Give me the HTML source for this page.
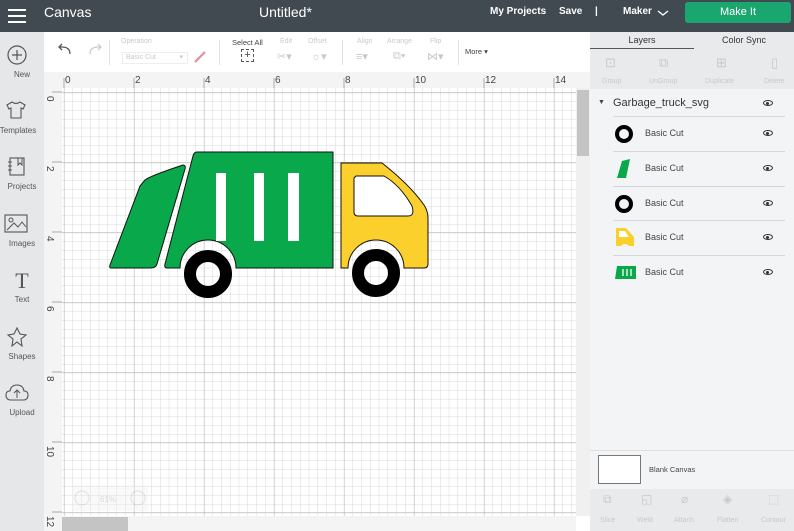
<!DOCTYPE html>
<html><head><meta charset="utf-8"><style>
*{margin:0;padding:0;box-sizing:border-box}
body{width:794px;height:531px;overflow:hidden;position:relative;font-family:"Liberation Sans",sans-serif;background:#fff}
.a{position:absolute}
.top{left:0;top:0;width:794px;height:32px;background:#414a51;color:#fff}
.side{left:0;top:32px;width:44px;height:499px;background:#e6e7e9}
.side div{position:absolute;width:44px;text-align:center;font-size:8px;color:#555}
.tb{left:44px;top:32px;width:546px;height:40px;background:#fff}
.g{color:#c6c9cc;font-size:7px}
.rp{left:590px;top:32px;width:204px;height:499px;background:#f3f4f6}
.row{position:absolute;left:23px;width:172px;height:35px;border-top:1.5px solid #d5d7da}
.row span{position:absolute;left:32px;top:11px;font-size:9px;color:#444}
.eye{position:absolute;width:10px;height:6px;border:1.5px solid #333;border-radius:50%;}
.eye:after{content:"";position:absolute;left:2px;top:0.5px;width:3px;height:3px;background:#333;border-radius:50%}
</style></head><body>
<div class="a top">
 <div class="a" style="left:8px;top:9px;width:18px;height:2px;background:#fff;box-shadow:0 6px 0 #fff,0 12px 0 #fff"></div>
 <div class="a" style="left:44px;top:4px;font-size:14px">Canvas</div>
 <div class="a" style="left:259px;top:4px;font-size:14px">Untitled*</div>
 <div class="a" style="left:490px;top:6px;font-size:10px;font-weight:bold">My Projects</div>
 <div class="a" style="left:559px;top:6px;font-size:10px;font-weight:bold">Save</div>
 <div class="a" style="left:595px;top:6px;font-size:10px;font-weight:bold">|</div>
 <div class="a" style="left:623px;top:6px;font-size:10px;font-weight:bold">Maker</div>
 <svg class="a" style="left:657px;top:9px" width="12" height="8"><path d="M1 2 L6 6 L11 2" stroke="#fff" fill="none" stroke-width="1.4"/></svg>
 <div class="a" style="left:685px;top:2px;width:106px;height:21px;background:#1aa66f;border-radius:3px;text-align:center;font-size:11px;line-height:21px">Make It</div>
</div>
<div class="a side">
 <svg class="a" style="left:6px;top:12px" width="22" height="22"><circle cx="11" cy="11" r="9" fill="none" stroke="#555" stroke-width="1.2"/><path d="M11 6v10M6 11h10" stroke="#555" stroke-width="1.2"/></svg>
 <div style="top:38px">New</div>
 <svg class="a" style="left:5px;top:68px" width="22" height="20"><path d="M7 2 L2 5 L4 9 L6 8 L6 18 L16 18 L16 8 L18 9 L20 5 L15 2 Q11 5 7 2Z" fill="none" stroke="#555" stroke-width="1.1"/></svg>
 <div style="top:94px;left:-4px">Templates</div>
 <svg class="a" style="left:7px;top:124px" width="20" height="22"><rect x="3" y="2" width="14" height="17" fill="none" stroke="#555" stroke-width="1.1"/><path d="M1 6h4M1 10h4M1 14h4M11 2v7l2-2 2 2V2" stroke="#555" fill="none"/></svg>
 <div style="top:150px">Projects</div>
 <svg class="a" style="left:4px;top:182px" width="24" height="20"><rect x="1" y="1" width="22" height="17" fill="none" stroke="#555" stroke-width="1.1"/><circle cx="7" cy="6" r="2" fill="none" stroke="#555"/><path d="M3 16 L10 9 L14 13 L18 8 L22 13" fill="none" stroke="#555"/></svg>
 <div style="top:207px">Images</div>
 <div style="top:236px;font-size:22px;font-family:'Liberation Serif',serif;color:#555">T</div>
 <div style="top:263px">Text</div>
 <svg class="a" style="left:6px;top:294px" width="22" height="22"><path d="M11 2 L14 8 L20 9 L15 13 L16 20 L11 16 L6 20 L7 13 L2 9 L8 8Z" fill="none" stroke="#555" stroke-width="1.1"/></svg>
 <div style="top:320px">Shapes</div>
 <svg class="a" style="left:5px;top:352px" width="24" height="18"><path d="M6 16 Q1 16 1 11 Q1 7 5 7 Q6 1 12 1 Q18 1 19 7 Q23 7 23 11 Q23 16 18 16Z" fill="none" stroke="#555" stroke-width="1.1"/><path d="M12 14V6M9 9l3-3 3 3" fill="none" stroke="#555"/></svg>
 <div style="top:376px">Upload</div>
</div>
<div class="a tb">
 <svg class="a" style="left:12px;top:10px" width="50" height="16"><path d="M14 12 Q14 5 6 5 L3 5 M6 2 L3 5 L6 8" fill="none" stroke="#555" stroke-width="1.3"/><path d="M34 12 Q34 5 42 5 L45 5 M42 2 L45 5 L42 8" fill="none" stroke="#ccc" stroke-width="1.3"/></svg>
 <div class="a" style="left:65px;top:8px;width:1px;height:25px;background:#e3e3e3"></div>
 <div class="a g" style="left:77px;top:6px">Operation</div>
 <div class="a g" style="left:78px;top:20px;width:66px;height:12px;border:1px solid #eee;padding-left:3px;line-height:10px">Basic Cut <span style="float:right;margin-right:4px">▾</span></div>
 <svg class="a" style="left:149px;top:18px" width="14" height="14"><path d="M2 12 L12 2" stroke="#e58a97" stroke-width="2"/></svg>
 <div class="a" style="left:175px;top:8px;width:1px;height:25px;background:#e3e3e3"></div>
 <div class="a" style="left:188px;top:6px;font-size:7.5px;color:#444">Select All</div>
 <div class="a" style="left:197px;top:17px;width:13px;height:13px;border:1px dashed #555;font-size:11px;line-height:11px;text-align:center;color:#444">+</div>
 <div class="a g" style="left:236px;top:6px">Edit</div><div class="a g" style="left:233px;top:18px;font-size:11px">✂▾</div>
 <div class="a g" style="left:264px;top:6px">Offset</div><div class="a g" style="left:267px;top:18px;font-size:11px">☼▾</div>
 <div class="a" style="left:298px;top:8px;width:1px;height:25px;background:#e3e3e3"></div>
 <div class="a g" style="left:313px;top:6px">Align</div><div class="a g" style="left:312px;top:18px;font-size:11px">≡▾</div>
 <div class="a g" style="left:343px;top:6px">Arrange</div><div class="a g" style="left:349px;top:18px;font-size:11px">⧉▾</div>
 <div class="a g" style="left:386px;top:6px">Flip</div><div class="a g" style="left:383px;top:18px;font-size:11px">⋈▾</div>
 <div class="a" style="left:414px;top:8px;width:1px;height:25px;background:#e3e3e3"></div>
 <div class="a" style="left:421px;top:15px;font-size:7.5px;color:#444">More ▾</div>
</div>
<svg class="a" style="left:44px;top:72px" width="546" height="459">
 <defs>
  <pattern id="mi" x="2.25" y="3.25" width="8.75" height="8.75" patternUnits="userSpaceOnUse"><path d="M0 0H8.75M0 0V8.75" stroke="#d9d9d9" stroke-width="1" fill="none"/></pattern>
  <pattern id="ma" x="20" y="20" width="70" height="70" patternUnits="userSpaceOnUse"><path d="M0 0H70M0 0V70" stroke="#b8b8b8" stroke-width="1" fill="none"/></pattern>
 </defs>
 <rect x="0" y="0" width="546" height="459" fill="#fff"/>
 <rect x="18" y="16" width="514" height="428" fill="url(#mi)"/>
 <rect x="18" y="16" width="514" height="428" fill="url(#ma)"/>
 <rect x="0" y="0" width="546" height="16" fill="#f4f4f4"/>
 <rect x="0" y="0" width="18" height="459" fill="#f4f4f4"/>
 <g stroke="#aaa" stroke-width="1">
  <path d="M20 6V16M90 6V16M160 6V16M230 6V16M300 6V16M370 6V16M440 6V16M510 6V16"/>
  <path d="M8 20H18M8 90H18M8 160H18M8 230H18M8 300H18M8 370H18M8 440H18"/>
 </g>
 <g font-size="10" fill="#444" font-family="Liberation Sans">
  <text x="21" y="11">0</text><text x="91" y="11">2</text><text x="161" y="11">4</text><text x="231" y="11">6</text><text x="301" y="11">8</text><text x="371" y="11">10</text><text x="441" y="11">12</text><text x="511" y="11">14</text>
  <text transform="translate(3,24) rotate(90)">0</text><text transform="translate(3,94) rotate(90)">2</text><text transform="translate(3,164) rotate(90)">4</text><text transform="translate(3,234) rotate(90)">6</text><text transform="translate(3,304) rotate(90)">8</text><text transform="translate(3,374) rotate(90)">10</text><text transform="translate(3,444) rotate(90)">12</text>
 </g>
 <rect x="532" y="16" width="14" height="428" fill="#f0f0f0"/>
 <rect x="533" y="18" width="12" height="66" fill="#c4c4c4"/>
 <rect x="18" y="444" width="514" height="15" fill="#f4f4f4"/>
 <rect x="18" y="445" width="66" height="14" fill="#c4c4c4"/>
 <g opacity="0.35"><rect x="28" y="413" width="76" height="26" fill="#eee"/><circle cx="38" cy="426" r="7" fill="none" stroke="#aaa"/><circle cx="94" cy="426" r="7" fill="none" stroke="#aaa"/><text x="56" y="430" font-size="8" fill="#999">61%</text></g>
 <g transform="translate(-44,-72)" stroke="#111" stroke-width="1">
  <path d="M145 180 Q150 176 183 165 Q186 165 185 169 L157 264 Q156 268 150 268 L111 268 Q109 268 110 265 L140 186Z" fill="#09a84a"/>
  <path d="M197 152 L333 152 L333 268 L236 268 A28 28 0 0 0 180 268 L167 268 Q164 268 165 264 L193 156 Q194 152 197 152Z" fill="#09a84a"/>
  <rect x="216" y="173" width="10" height="68" fill="#fff" stroke="none"/>
  <rect x="254" y="173" width="10" height="68" fill="#fff" stroke="none"/>
  <rect x="288" y="173" width="11" height="68" fill="#fff" stroke="none"/>
  <path d="M341 163 L382 163 Q410 185 424 205 Q428 211 428 218 L428 264 Q428 268 424 268 L404 268 A28 28 0 0 0 348 268 L341 268Z" fill="#fcd02c"/>
  <path d="M356 176 L384 176 Q400 185 412 206 Q415 216 408 216 L358 216 Q354 216 354 212 L354 178Z" fill="#fff"/>
 </g>
 <g transform="translate(-44,-72)">
  <circle cx="208" cy="274" r="18" fill="none" stroke="#000" stroke-width="12"/>
  <circle cx="376" cy="273" r="18" fill="none" stroke="#000" stroke-width="12"/>
 </g>
</svg>
<div class="a rp">
 <div class="a" style="left:0;top:0;width:204px;height:17px;background:#e9eaec"></div>
 <div class="a" style="left:0;top:0;width:104px;height:17px;border-bottom:1.5px solid #555;text-align:center;font-size:9px;line-height:16px;color:#333">Layers</div>
 <div class="a" style="left:104px;top:0;width:100px;text-align:center;font-size:9px;line-height:16px;color:#333">Color Sync</div>
 <div class="a" style="left:0;top:17px;width:204px;height:40px;background:#e9eaec"></div>
 <div class="a g" style="left:15px;top:23px;font-size:13px">⊡</div><div class="a g" style="left:12px;top:46px">Group</div>
 <div class="a g" style="left:69px;top:23px;font-size:13px">⧉</div><div class="a g" style="left:59px;top:46px">UnGroup</div>
 <div class="a g" style="left:126px;top:23px;font-size:13px">⊞</div><div class="a g" style="left:115px;top:46px">Duplicate</div>
 <div class="a g" style="left:181px;top:23px;font-size:13px">▯</div><div class="a g" style="left:174px;top:46px">Delete</div>
 <div class="a" style="left:8px;top:67px;font-size:7px;color:#444">▼</div>
 <div class="a" style="left:23px;top:65px;font-size:11px;color:#333">Garbage_truck_svg</div>
 <div class="eye" style="left:173px;top:68px"></div>
 <div class="row" style="top:84px"><svg class="a" style="left:1px;top:7px" width="20" height="20"><circle cx="10" cy="10" r="7" fill="none" stroke="#000" stroke-width="4"/></svg><span>Basic Cut</span><div class="eye" style="left:150px;top:13px"></div></div>
 <div class="row" style="top:119px"><svg class="a" style="left:1px;top:6px" width="20" height="22"><path d="M8 3 L16 1 L12 20 L3 20Z" fill="#09a84a"/></svg><span>Basic Cut</span><div class="eye" style="left:150px;top:13px"></div></div>
 <div class="row" style="top:154px"><svg class="a" style="left:1px;top:7px" width="20" height="20"><circle cx="10" cy="10" r="7" fill="none" stroke="#000" stroke-width="4"/></svg><span>Basic Cut</span><div class="eye" style="left:150px;top:13px"></div></div>
 <div class="row" style="top:188px"><svg class="a" style="left:1px;top:5px" width="22" height="22"><path d="M2 2 L12 2 L20 11 L20 20 L15 20 A5 5 0 0 0 7 20 L2 20Z" fill="#fcd02c"/><path d="M5 5 L11 5 L15 11 L5 11Z" fill="#fff"/></svg><span>Basic Cut</span><div class="eye" style="left:150px;top:13px"></div></div>
 <div class="row" style="top:223px"><svg class="a" style="left:0;top:8px" width="24" height="18"><path d="M4 2 L23 2 L23 15 L2 15Z" fill="#09a84a"/><path d="M10 5v7M14 5v7M18 5v7" stroke="#fff" stroke-width="1.3"/></svg><span>Basic Cut</span><div class="eye" style="left:150px;top:13px"></div></div>
 <div class="a" style="left:0;top:418px;width:204px;height:1px;background:#e0e0e0"></div>
 <div class="a" style="left:8px;top:423px;width:43px;height:29px;border:1px solid #777;background:#fff"></div>
 <div class="a" style="left:59px;top:433px;font-size:7.5px;color:#444">Blank Canvas</div>
 <div class="a" style="left:0;top:457px;width:204px;height:42px;background:#e9eaec"></div>
 <div class="a g" style="left:13px;top:460px;font-size:12px">⧉</div><div class="a g" style="left:10px;top:485px">Slice</div>
 <div class="a g" style="left:51px;top:460px;font-size:12px">◱</div><div class="a g" style="left:47px;top:485px">Weld</div>
 <div class="a g" style="left:91px;top:460px;font-size:12px">⌀</div><div class="a g" style="left:84px;top:485px">Attach</div>
 <div class="a g" style="left:133px;top:460px;font-size:12px">◈</div><div class="a g" style="left:127px;top:485px">Flatten</div>
 <div class="a g" style="left:178px;top:460px;font-size:12px">⬚</div><div class="a g" style="left:171px;top:485px">Contour</div>
</div>
</body></html>
